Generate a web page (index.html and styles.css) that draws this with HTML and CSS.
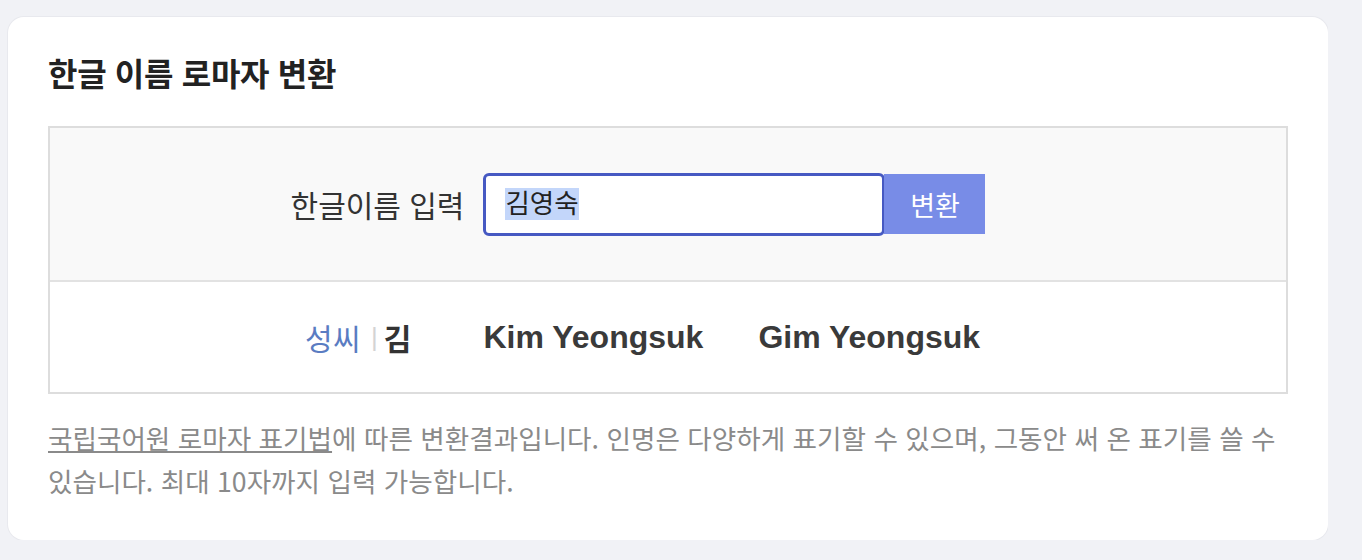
FILE: index.html
```html
<!DOCTYPE html>
<html lang="ko">
<head>
<meta charset="utf-8">
<title>한글 이름 로마자 변환</title>
<link rel="stylesheet" href="styles.css">
</head>
<body>
<div class="card">
  <h2 class="title">한글 이름 로마자 변환</h2>
  <div class="box">
    <div class="form-row">
      <label class="label" for="name">한글이름 입력</label>
      <div class="field"><span class="sel">김영숙</span></div>
      <button class="btn" type="button">변환</button>
    </div>
    <div class="result-row">
      <div class="surname"><span class="sn-label">성씨</span><span class="bar">|</span><span class="sn-value">김</span></div>
      <div class="roman first">Kim Yeongsuk</div>
      <div class="roman">Gim Yeongsuk</div>
    </div>
  </div>
  <p class="note"><a class="link" href="#">국립국어원 로마자 표기법</a>에 따른 변환결과입니다. 인명은 다양하게 표기할 수 있으며, 그동안 써 온 표기를 쓸 수 있습니다. 최대 10자까지 입력 가능합니다.</p>
</div>
</body>
</html>
```
FILE: styles.css
```css
html, body {
  margin: 0;
  padding: 0;
}
body {
  background: #f1f2f6;
  font-family: "Liberation Sans", "Noto Sans CJK KR", sans-serif;
  color: #222;
  padding: 17px 0 0 8px;
  width: 1320px;
}
.card {
  background: #fff;
  border-radius: 16px;
  box-shadow: 0 0 0 1px #e8e9ee;
  padding: 40px 40px 38px;
}
.title {
  margin: 0 0 33px;
  font-size: 32px;
  line-height: 36px;
  font-weight: 700;
  color: #222;
  letter-spacing: -0.3px;
}
.box {
  border: 2px solid #dddddd;
}
.form-row {
  background: #f9f9f9;
  border-bottom: 2px solid #e2e2e2;
  height: 152px;
  display: flex;
  align-items: center;
  justify-content: center;
  padding-right: 60px;
}
.label {
  font-size: 30px;
  color: #333;
  margin-right: 19px;
}
.field {
  box-sizing: border-box;
  width: 402px;
  height: 63px;
  border: 3px solid #4659c2;
  border-radius: 6px;
  background: #fff;
  display: flex;
  align-items: center;
  padding-left: 19px;
  font-size: 26.5px;
  color: #222;
}
.sel {
  background: #c3d6fa;
  line-height: 32px;
}
.btn {
  box-sizing: border-box;
  width: 101px;
  height: 60px;
  border: none;
  background: #788ce7;
  color: #fff;
  font-family: inherit;
  font-size: 27px;
  padding: 0;
  margin-left: -1px;
}
.result-row {
  height: 110px;
  display: flex;
  align-items: center;
  justify-content: center;
  padding-right: 51px;
}
.surname {
  display: flex;
  align-items: center;
  font-size: 30px;
}
.sn-label {
  color: #5a7cc2;
  letter-spacing: 0.5px;
}
.bar {
  color: #d4d4d4;
  font-size: 26px;
  margin: 0 6px 0 10px;
}
.sn-value {
  font-weight: 700;
  color: #333;
}
.roman {
  font-size: 32px;
  font-weight: 700;
  color: #3a3a3a;
  margin-left: 55px;
}
.roman.first {
  margin-left: 72px;
}
.note {
  margin: 22px 0 0;
  font-family: "Noto Sans CJK KR", sans-serif;
  font-size: 26.6px;
  line-height: 43px;
  color: #8a8a8a;
  word-break: keep-all;
}
.link {
  color: #8a8a8a;
  text-decoration: underline;
}
```
